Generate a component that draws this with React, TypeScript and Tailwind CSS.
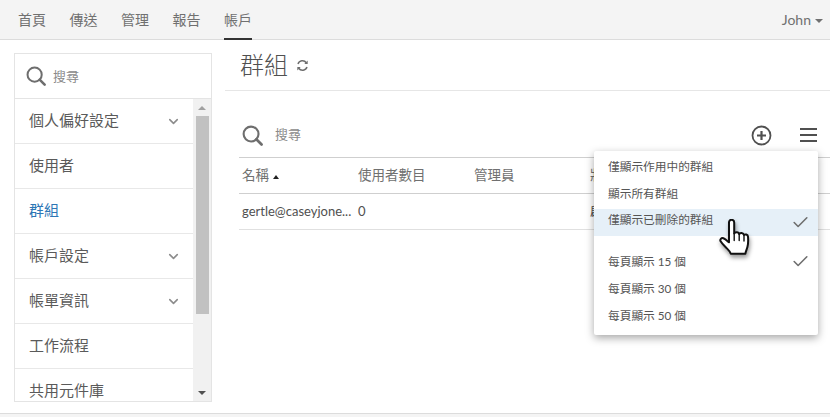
import { ChevronDown, Check } from "lucide-react";

const FONT = { fontFamily: 'Lato, "Noto Sans CJK TC", sans-serif' };

const navItems = ["首頁", "傳送", "管理", "報告", "帳戶"];

const sideItems = [
  { label: "個人偏好設定", expandable: true },
  { label: "使用者" },
  { label: "群組", active: true },
  { label: "帳戶設定", expandable: true },
  { label: "帳單資訊", expandable: true },
  { label: "工作流程" },
  { label: "共用元件庫" },
];

function SearchIcon({ size = 20 }: { size?: number }) {
  return (
    <svg width={size} height={size} viewBox="0 0 22 22" fill="none" stroke="#6e6e6e" strokeWidth="2.2">
      <circle cx="9.5" cy="9.5" r="7.8" />
      <path d="M15 15 L20.500 20.500" strokeLinecap="round" strokeWidth="2.8" />
    </svg>
  );
}

function SyncIcon() {
  return (
    <svg width="13" height="13" viewBox="0 0 13 13" fill="none" stroke="#6e6e6e" strokeWidth="1.500">
      <path d="M2 5a4.700 4.700 0 0 1 8.300-1.200" />
      <path d="M11 8a4.700 4.700 0 0 1-8.300 1.200" />
      <path d="M11.700 1.500v3.400H8.300z" fill="#6e6e6e" stroke="none" />
      <path d="M1.300 11.500V8.100h3.400z" fill="#6e6e6e" stroke="none" />
    </svg>
  );
}

function HandCursor() {
  return (
    <svg width="34" height="42" viewBox="0 0 34 42" className="drop-shadow-[1px_3px_2px_rgba(0,0,0,0.4)]">
      <path
        d="M11 3.500c0-1.600 1.200-2.700 2.600-2.700s2.600 1.100 2.600 2.700v11c.4-1.500 4.600-1.900 5 .6.6-1.600 4.400-1.600 4.800 1 1-1.200 3.800-.8 4 1.600.3 3.400.2 7.300-.6 10.400-.6 2.500-1.600 4-2 6.600H12.800c-.8-2.400-2.400-3.800-4.200-5.600-2-2-4.600-4.400-6-6.800-1-1.800.8-3.800 2.800-3 1.800.7 3.900 2.600 5.600 4z"
        fill="#fff"
        stroke="#111"
        strokeWidth="2"
        strokeLinejoin="round"
      />
      <path d="M16.200 14.500v7M21.200 15.500v6M26 17v5" stroke="#111" strokeWidth="1.400" fill="none" strokeLinecap="round" />
    </svg>
  );
}

function MenuRow({ label, checked, highlight }: { label: string; checked?: boolean; highlight?: boolean }) {
  return (
    <div className={`relative flex h-[27px] items-center pl-[14px] text-[11.7px] text-[#555] ${highlight ? "bg-[#e6f0f8] pb-[5px]" : ""}`}>
      <span>{label}</span>
      {checked ? <Check size={19} strokeWidth={2} className="absolute right-[8px] top-[4px] text-[#6e6e6e]" /> : null}
    </div>
  );
}

export default function App() {
  return (
    <div className="flex h-[417px] w-[830px] flex-col overflow-hidden bg-white" style={FONT}>
      <header className="flex h-[40px] shrink-0 items-stretch justify-between border-b border-[#dcdcdc] bg-[#f4f4f4] pl-[18px] pr-[7px]">
        <nav className="flex gap-[23.500px]">
          {navItems.map((item, index) => (
            <div
              key={item}
              className={`flex items-center text-[14px] text-[#707070] ${index === 4 ? "-mb-px border-b-2 border-[#333]" : ""}`}
            >
              {item}
            </div>
          ))}
        </nav>
        <div className="flex items-center gap-[4px] text-[14px] text-[#707070]">
          John
          <span className="mt-[2px] h-0 w-0 border-x-[4px] border-t-[4px] border-x-transparent border-t-[#707070]" />
        </div>
      </header>

      <div className="flex min-h-0 flex-1">
        <aside className="ml-[14px] mt-[13px] flex h-[349px] w-[198px] shrink-0 flex-col border border-[#e4e4e4]">
          <div className="flex h-[45px] shrink-0 items-center gap-[7px] border-b border-[#e4e4e4] pl-[11px] text-[13px] text-[#8a8a8a]">
            <SearchIcon />
            <span className="pt-[1px]">搜尋</span>
          </div>
          <div className="flex min-h-0 flex-1">
            <ul className="min-w-0 flex-1 overflow-hidden">
              {sideItems.map((item) => (
                <li
                  key={item.label}
                  className={`flex h-[45px] shrink-0 items-center justify-between border-b border-[#e8e8e8] pb-[2px] pl-[14px] pr-[12px] text-[15px] ${item.active ? "text-[#2d76b5]" : "text-[#5a5a5a]"}`}
                >
                  {item.label}
                  {item.expandable ? <ChevronDown size={15} strokeWidth={2.5} className="mt-[2px] text-[#8c8c8c]" /> : null}
                </li>
              ))}
            </ul>
            <div className="flex w-[18px] shrink-0 flex-col items-center bg-[#f1f1f1]">
              <div className="flex h-[17px] items-center justify-center">
                <span className="h-0 w-0 border-x-[4px] border-b-[4px] border-x-transparent border-b-[#a0a0a0]" />
              </div>
              <div className="h-[198px] w-[13px] bg-[#c1c1c1]" />
              <div className="mt-auto flex h-[17px] items-center justify-center">
                <span className="h-0 w-0 border-x-[4px] border-t-[4px] border-x-transparent border-t-[#505050]" />
              </div>
            </div>
          </div>
        </aside>

        <main className="relative ml-[13px] min-w-0 flex-1">
          <div className="flex h-[51px] items-center gap-[8px] border-b border-[#e6e6e6] pl-[15px]">
            <span className="text-[24px] font-light text-[#505050]">群組</span>
            <SyncIcon />
          </div>

          <div className="flex h-[66px] items-center pl-[17px] pr-[13px] pt-[22px] text-[13px] text-[#8a8a8a]">
            <SearchIcon size={21} />
            <span className="ml-[12px]">搜尋</span>
            <div className="ml-auto flex items-center gap-[28px]">
              <svg width="21" height="21" viewBox="0 0 21 21" fill="none" stroke="#505050" strokeWidth="1.800">
                <circle cx="10.500" cy="10.500" r="9" />
                <path d="M10.500 6v9M6 10.500h9" strokeWidth="2.200" />
              </svg>
              <svg width="17" height="14" viewBox="0 0 17 14" stroke="#505050" strokeWidth="2">
                <path d="M0 1h17M0 7h17M0 13h17" />
              </svg>
            </div>
          </div>

          <div className="ml-[14px] border-t border-[#cfcfcf]">
            <div className="flex h-[36px] items-center border-b border-[#cfcfcf] pl-[3px] text-[13.500px] text-[#707070]">
              <div className="flex w-[116px] items-center gap-[4px]">
                名稱
                <span className="mt-[3px] h-0 w-0 border-x-[3.500px] border-b-[4px] border-x-transparent border-b-[#222]" />
              </div>
              <div className="w-[116px]">使用者數目</div>
              <div className="w-[116px]">管理員</div>
              <div>狀態</div>
            </div>
            <div className="flex h-[36px] items-center border-b border-[#e0e0e0] pl-[3px] text-[13px] text-[#505050]">
              <div className="w-[116px] whitespace-nowrap">gertle@caseyjone...</div>
              <div className="w-[116px]">0</div>
              <div className="w-[116px]" />
              <div>啟用</div>
            </div>
          </div>

          <div className="absolute left-[369px] top-[111px] w-[224px] rounded-[2px] bg-white pb-[6px] pt-[2px] shadow-[0_3px_8px_rgba(0,0,0,0.35)]">
            <MenuRow label="僅顯示作用中的群組" />
            <MenuRow label="顯示所有群組" />
            <div className="h-[2px]" />
            <MenuRow label="僅顯示已刪除的群組" checked highlight />
            <div className="h-[12px]" />
            <MenuRow label="每頁顯示 15 個" checked />
            <MenuRow label="每頁顯示 30 個" />
            <MenuRow label="每頁顯示 50 個" />
          </div>

          <div className="absolute left-[493px] top-[179px]">
            <HandCursor />
          </div>
        </main>
      </div>

      <footer className="h-[4px] shrink-0 border-t border-[#dcdcdc] bg-[#f4f4f4]" />
    </div>
  );
}
